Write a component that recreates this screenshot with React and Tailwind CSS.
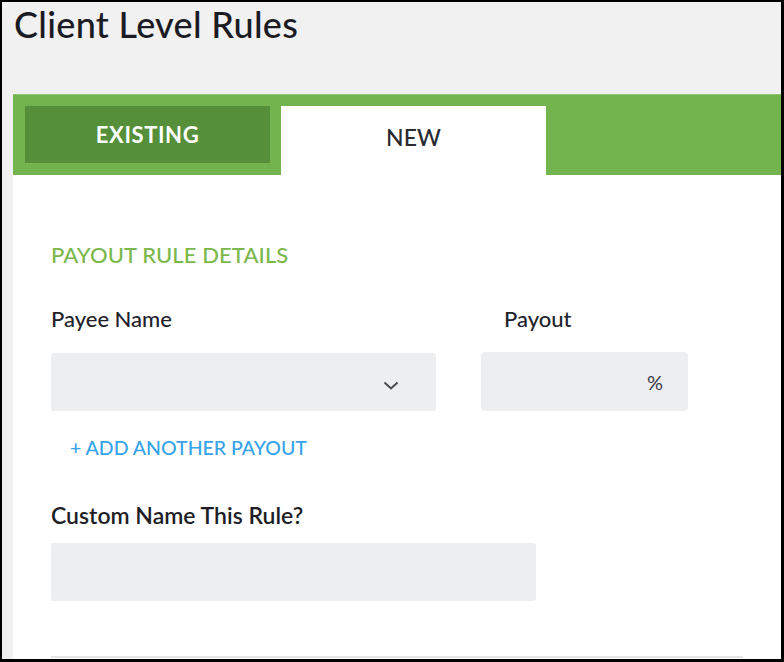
export default function App() {
  return (
    <div
      className="w-[784px] h-[662px] overflow-hidden bg-[#f1f1f1] border-black border-t-2 border-l-2 border-r-[3px] border-b-[3px] flex flex-col"
      style={{ fontFamily: "Lato, 'Noto Sans', sans-serif" }}
    >
      <div className="pl-[12px] pt-[1px] h-[92px] text-[36px] leading-[42px] font-medium text-[#1b1b24] tracking-[0.3px]">
        Client Level Rules
      </div>
      <div className="ml-[11px] flex-1 flex flex-col bg-white">
        <div className="h-[81px] bg-[#73b44f] border-t border-[#8cc56c] flex items-start pl-[12px] pt-[11px] gap-[11px]">
          <div className="w-[245px] h-[57px] bg-[#558f3a] flex items-center justify-center text-white text-[22px] font-bold tracking-[0.6px]">
            EXISTING
          </div>
          <div className="w-[265px] h-[69px] bg-white flex items-center justify-center text-[#2a2a33] text-[23px] font-medium pb-[6px]">
            NEW
          </div>
        </div>
        <div className="pl-[38px] flex flex-col">
          <div className="mt-[68px] h-[24px] leading-[24px] text-[22px] font-medium text-[#7bb84c] tracking-[0.1px]">
            PAYOUT RULE DETAILS
          </div>
          <div className="mt-[40px] flex gap-[45px]">
            <div className="w-[385px] flex flex-col">
              <div className="h-[24px] leading-[24px] text-[22px] font-medium text-[#22222b]">Payee Name</div>
              <div className="mt-[22px] h-[58px] rounded-[3px] bg-[#edeef0] flex items-center justify-end pr-[37px]">
                <svg width="16" height="10" viewBox="0 0 16 10" className="mt-[8px]">
                  <path d="M1.5 1.5 L8 7.5 L14.5 1.5" fill="none" stroke="#4a4a4f" strokeWidth="2" />
                </svg>
              </div>
            </div>
            <div className="w-[207px] flex flex-col">
              <div className="pl-[23px] h-[24px] leading-[24px] text-[22px] font-medium text-[#22222b]">Payout</div>
              <div className="mt-[21px] h-[59px] rounded-[4px] bg-[#edeef0] flex items-center justify-end pr-[25px] text-[20px] text-[#3a3a44]">
                %
              </div>
            </div>
          </div>
          <div className="mt-[25px] pl-[19px] h-[24px] leading-[24px] text-[19.5px] font-medium text-[#36a3ea]">
            + ADD ANOTHER PAYOUT
          </div>
          <div className="mt-[43px] h-[24px] leading-[24px] text-[23px] font-semibold text-[#1e1e26]">
            Custom Name This Rule?
          </div>
          <div className="mt-[16px] w-[485px] h-[58px] rounded-[3px] bg-[#edeef0]"></div>
          <div className="mt-[55px] w-[692px] h-[2px] bg-[#e4e5e7]"></div>
        </div>
      </div>
    </div>
  );
}
